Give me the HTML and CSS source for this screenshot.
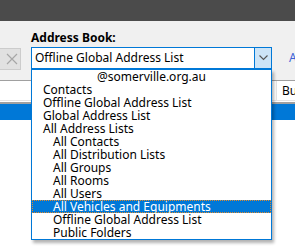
FILE: index.html
```html
<!DOCTYPE html>
<html lang="en">
<head>
    <meta charset="UTF-8">
    <title>Address Book</title>
    <link rel="stylesheet" href="styles.css">
</head>
<body>
<div class="titlebar"></div>

<div class="toolbar">
    <button class="clear-btn">
        <svg width="12" height="12" viewBox="0 0 12 12">
            <path d="M1 1 L11 11 M11 1 L1 11" stroke="#a6a6a6" stroke-width="1.2" fill="none"/>
        </svg>
    </button>
    <div class="field">
        <label class="field-label">Address Book:</label>
        <div class="combo">
            <span class="combo-text">Offline Global Address List</span>
            <span class="combo-arrow">
                <svg width="9" height="6" viewBox="0 0 9 6">
                    <path d="M0.5 0.5 L4.5 4.5 L8.5 0.5" stroke="#555" stroke-width="1.1" fill="none"/>
                </svg>
            </span>
        </div>
    </div>
    <a class="adv-link">Advanced Find</a>
</div>

<div class="listview">
    <div class="list-header">
        <div class="col col-name">Name</div>
        <div class="col col-bus">Business Phone</div>
    </div>
    <div class="list-gap"></div>
    <div class="list-row selected"></div>
</div>

<ul class="dropdown">
    <li class="item center">@somerville.org.au</li>
    <li class="item lvl1">Contacts</li>
    <li class="item lvl1">Offline Global Address List</li>
    <li class="item lvl1">Global Address List</li>
    <li class="item lvl1">All Address Lists</li>
    <li class="item lvl2">All Contacts</li>
    <li class="item lvl2">All Distribution Lists</li>
    <li class="item lvl2">All Groups</li>
    <li class="item lvl2">All Rooms</li>
    <li class="item lvl2">All Users</li>
    <li class="item lvl2 active">All Vehicles and Equipments</li>
    <li class="item lvl2">Offline Global Address List</li>
    <li class="item lvl2">Public Folders</li>
</ul>
</body>
</html>
```

FILE: styles.css
```css
html, body {
    margin: 0;
    padding: 0;
}

body {
    width: 295px;
    height: 249px;
    overflow: hidden;
    position: relative;
    background-color: #fff;
    font-family: "Noto Sans", "Open Sans", sans-serif;
    font-size: 12px;
    color: #000;
}

.titlebar {
    height: 21px;
    background-color: #4b4b4b;
}

.toolbar {
    height: 59px;
    background-color: #f0f0f0;
    display: flex;
    align-items: flex-start;
    overflow: hidden;
}

.clear-btn {
    flex-shrink: 0;
    margin-top: 27px;
    width: 21px;
    height: 22px;
    padding: 0 0 0 3px;
    border: 1px solid #cccccc;
    border-left: none;
    background-color: #e1e1e1;
    display: flex;
    align-items: center;
    justify-content: center;
}

.field {
    flex-shrink: 0;
    margin-left: 10px;
    width: 241px;
    padding-top: 9px;
}

.field-label {
    display: block;
    font-weight: bold;
    line-height: 16px;
    height: 17px;
}

.combo {
    height: 22px;
    box-sizing: border-box;
    border: 1px solid #0078d7;
    background-color: #fff;
    display: flex;
    align-items: stretch;
}

.combo-text {
    flex: 1;
    padding-left: 3px;
    line-height: 20px;
}

.combo-arrow {
    width: 16px;
    background-color: #cce4f7;
    border-left: 1px solid #0078d7;
    display: flex;
    align-items: center;
    justify-content: center;
}

.adv-link {
    flex-shrink: 0;
    margin-left: 17px;
    margin-top: 29px;
    color: #3b62d8;
    line-height: 16px;
    white-space: nowrap;
}

.listview {
    border-top: 1px solid #a0a0a0;
    background-color: #fff;
}

.list-header {
    height: 19px;
    display: flex;
    border-bottom: 1px solid #e5e5e5;
    overflow: hidden;
}

.col {
    flex-shrink: 0;
    line-height: 19px;
    white-space: nowrap;
}

.col-name {
    width: 276px;
    color: transparent;
}

.col-bus {
    border-left: 1px solid #e5e5e5;
    padding-left: 5px;
}

.list-gap {
    height: 1px;
    border-bottom: 2px solid #a0a0a0;
}

.list-row {
    height: 16px;
}

.selected {
    background-color: #0078d7;
}

.dropdown {
    position: absolute;
    left: 31px;
    top: 69px;
    width: 241px;
    height: 171px;
    box-sizing: border-box;
    margin: 0;
    padding: 0;
    list-style: none;
    background-color: #fff;
    border: 1px solid #0078d7;
    box-shadow: 2px 3px 3px rgba(0, 0, 0, 0.3);
}

.item {
    height: 13px;
    line-height: 14px;
    white-space: nowrap;
    box-sizing: border-box;
}

.center {
    text-align: center;
}

.lvl1 {
    padding-left: 11px;
}

.lvl2 {
    padding-left: 21px;
}

.active {
    background-color: #0078d7;
    color: #fff;
    outline: 1px dotted #e08a2c;
    outline-offset: -1px;
}
```
